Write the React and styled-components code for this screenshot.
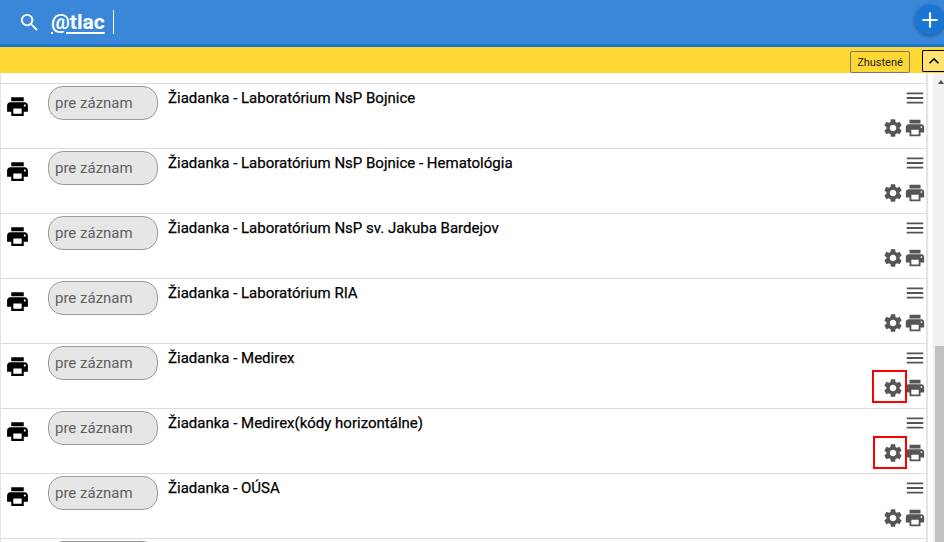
import React from 'react';
import styled, { createGlobalStyle } from 'styled-components';
import { MdSearch, MdAdd, MdPrint, MdSettings, MdMenu, MdKeyboardArrowUp } from 'react-icons/md';

const GlobalStyle = createGlobalStyle`
  html, body {
    margin: 0;
    padding: 0;
    height: 100%;
    overflow: hidden;
    background: #fff;
    font-family: Roboto, "Liberation Sans", sans-serif;
  }
`;

const Page = styled.div`
  width: 944px;
  height: 542px;
  display: flex;
  flex-direction: column;
  overflow: hidden;
`;

const Header = styled.header`
  height: 44px;
  flex: none;
  display: flex;
  align-items: center;
  padding-left: 18px;
  background: #3a87d9;
  border-bottom: 3px solid #1976d2;
  position: relative;
  color: #fff;
`;

const Title = styled.span`
  margin-left: 10px;
  font-size: 21px;
  font-weight: 700;
  text-decoration: underline;
  text-underline-offset: 3px;
`;

const Caret = styled.span`
  width: 1px;
  height: 24px;
  margin-left: 8px;
  background: #fff;
`;

const AddButton = styled.button`
  position: absolute;
  top: 5px;
  right: -1px;
  width: 30px;
  height: 30px;
  padding: 0;
  display: flex;
  align-items: center;
  justify-content: center;
  border: 0;
  border-radius: 50%;
  background: #1976d2;
  color: #fff;
  box-shadow: 0 1px 4px rgba(0, 0, 0, 0.4);
`;

const Toolbar = styled.div`
  height: 26px;
  flex: none;
  display: flex;
  align-items: flex-start;
  justify-content: flex-end;
  padding-top: 3px;
  box-sizing: border-box;
  background: #fdd835;
`;

const DenseButton = styled.button`
  width: 60px;
  height: 22px;
  margin: 1px 12px 0 0;
  padding: 0;
  border: 1px solid #777;
  border-radius: 2px;
  background: #fdd835;
  color: #222;
  font: 11px Roboto, sans-serif;
`;

const CollapseButton = styled.button`
  width: 22px;
  height: 22px;
  padding: 0;
  display: flex;
  align-items: center;
  justify-content: center;
  border: 1px solid #000;
  border-right: 0;
  border-radius: 2px 0 0 2px;
  background: #ffe270;
  color: #000;
`;

const Body = styled.div`
  flex: 1;
  min-height: 0;
  display: flex;
  justify-content: space-between;
`;

const List = styled.main`
  width: 928px;
  flex: none;
  box-sizing: border-box;
  padding-top: 10px;
  overflow: hidden;
  border-left: 1px solid #e4e4e4;
  border-right: 2px solid #e4e4e4;
`;

const RowWrap = styled.div`
  height: 64px;
  display: flex;
  border-top: 1px solid #dcdcdc;
`;

const LeadIcon = styled.div`
  width: 47px;
  flex: none;
  padding: 10px 0 0 4px;
  box-sizing: border-box;
  color: #000;
  line-height: 0;
`;

const Pill = styled.div`
  width: 110px;
  height: 34px;
  margin-top: 2px;
  flex: none;
  box-sizing: border-box;
  padding-left: 6px;
  display: flex;
  align-items: center;
  border: 1px solid #9a9a9a;
  border-radius: 15px;
  background: #e6e6e6;
  color: #5f5f5f;
  font-size: 15px;
`;

const Name = styled.div`
  flex: 1;
  margin: 5px 0 0 10px;
  color: #000;
  font-size: 15px;
  font-weight: 400;
  -webkit-text-stroke: 0.25px #000;
  line-height: 18px;
`;

const Actions = styled.div`
  width: 50px;
  flex: none;
  display: flex;
  flex-direction: column;
  align-items: flex-end;
  color: #555;
  line-height: 0;
`;

const MenuIcon = styled(MdMenu)`
  margin-top: 3px;
`;

const ActionIcons = styled.div`
  margin-top: 8px;
  display: flex;
`;

const Gear = styled.span`
  position: relative;
  display: block;
  line-height: 0;
`;

/* red annotation box over the gear, drawn by hand so the two differ a little */
const Highlight = styled.span`
  position: absolute;
  left: ${({ $second }) => ($second ? '-9px' : '-10px')};
  top: ${({ $second }) => ($second ? '-6px' : '-7px')};
  width: ${({ $second }) => ($second ? '34px' : '35px')};
  height: 33px;
  box-sizing: border-box;
  border: 2px solid #f00;
`;

const Scrollbar = styled.div`
  width: 11px;
  flex: none;
  position: relative;
  background: #f1f1f1;
`;

const ScrollArrow = styled.div`
  position: absolute;
  top: 7px;
  left: 5px;
  width: 0;
  height: 0;
  border-left: 3px solid transparent;
  border-right: 3px solid transparent;
  border-bottom: 4px solid #505050;
`;

const ScrollThumb = styled.div`
  position: absolute;
  top: 273px;
  left: 2px;
  right: 0;
  bottom: 0;
  background: #c1c1c1;
`;

const rows = [
  { name: 'Žiadanka - Laboratórium NsP Bojnice', pill: 'pre záznam' },
  { name: 'Žiadanka - Laboratórium NsP Bojnice - Hematológia', pill: 'pre záznam' },
  { name: 'Žiadanka - Laboratórium NsP sv. Jakuba Bardejov', pill: 'pre záznam' },
  { name: 'Žiadanka - Laboratórium RIA', pill: 'pre záznam' },
  { name: 'Žiadanka - Medirex', pill: 'pre záznam', mark: 'first' },
  { name: 'Žiadanka - Medirex(kódy horizontálne)', pill: 'pre záznam', mark: 'second' },
  { name: 'Žiadanka - OÚSA', pill: 'pre záznam' },
  { name: '', pill: '' },
];

function Row({ name, pill, mark }) {
  return (
    <RowWrap>
      <LeadIcon>
        <MdPrint size={25} />
      </LeadIcon>
      <Pill>{pill}</Pill>
      <Name>{name}</Name>
      <Actions>
        <MenuIcon size={22} />
        <ActionIcons>
          <Gear>
            <MdSettings size={22} />
            {mark && <Highlight $second={mark === 'second'} />}
          </Gear>
          <MdPrint size={22} />
        </ActionIcons>
      </Actions>
    </RowWrap>
  );
}

export default function App() {
  return (
    <Page>
      <GlobalStyle />
      <Header>
        <MdSearch size={23} />
        <Title>@tlac</Title>
        <Caret />
        <AddButton>
          <MdAdd size={26} />
        </AddButton>
      </Header>
      <Toolbar>
        <DenseButton>Zhustené</DenseButton>
        <CollapseButton>
          <MdKeyboardArrowUp size={20} />
        </CollapseButton>
      </Toolbar>
      <Body>
        <List>
          {rows.map((row, idx) => (
            <Row key={idx} name={row.name} pill={row.pill} mark={row.mark} />
          ))}
        </List>
        <Scrollbar>
          <ScrollArrow />
          <ScrollThumb />
        </Scrollbar>
      </Body>
    </Page>
  );
}
